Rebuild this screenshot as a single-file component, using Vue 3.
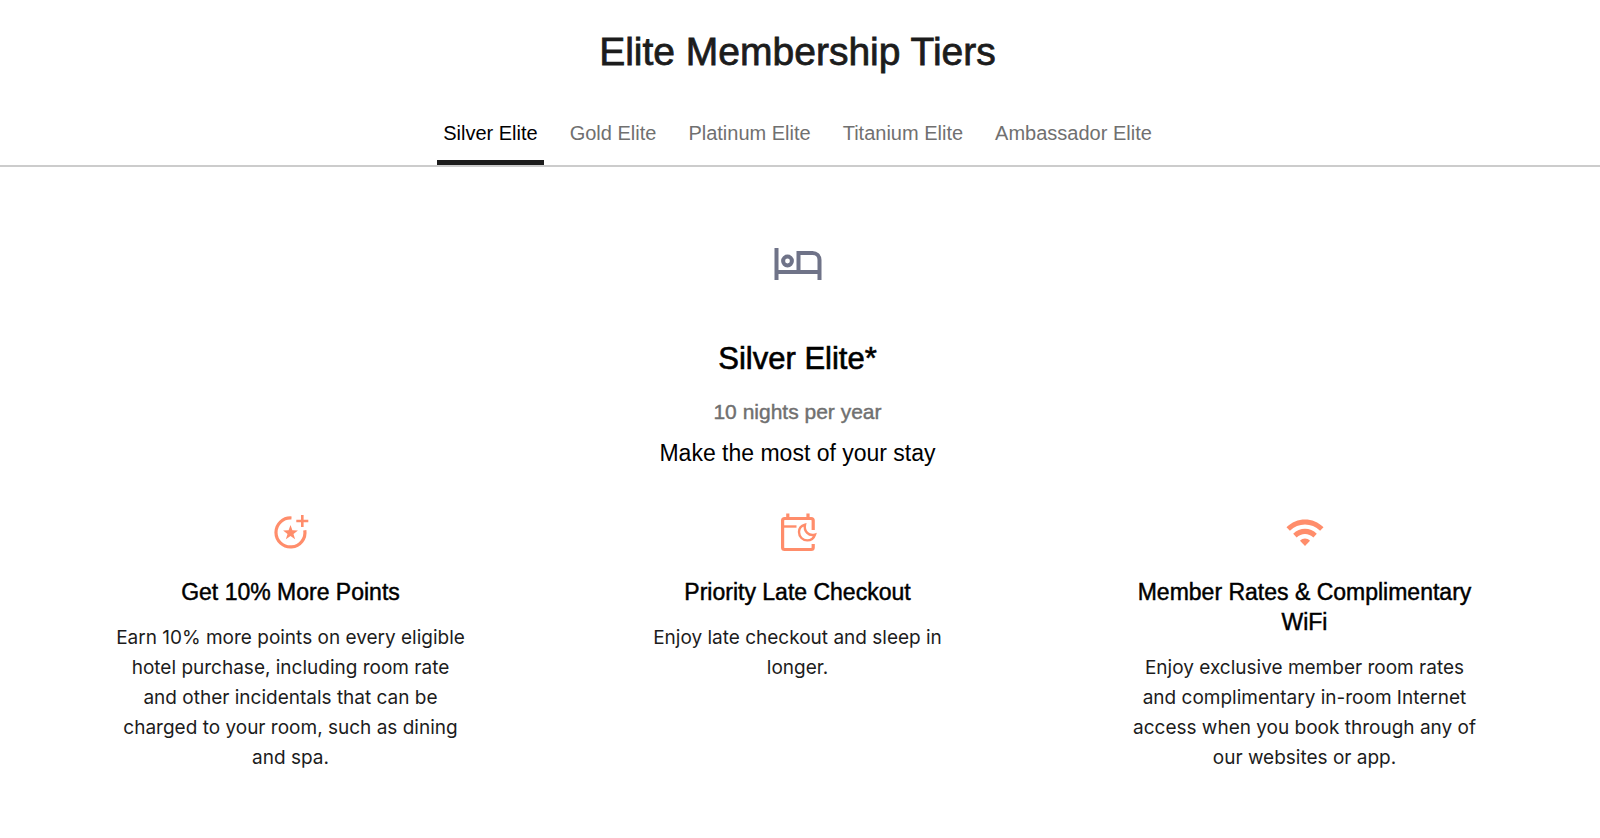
<script setup>
import { ref } from 'vue'

const tiers = ['Silver Elite', 'Gold Elite', 'Platinum Elite', 'Titanium Elite', 'Ambassador Elite']
const active = ref('Silver Elite')

const benefits = [
  {
    icon: 'points',
    title: 'Get 10% More Points',
    text: 'Earn 10% more points on every eligible hotel purchase, including room rate and other incidentals that can be charged to your room, such as dining and spa.',
  },
  {
    icon: 'checkout',
    title: 'Priority Late Checkout',
    text: 'Enjoy late checkout and sleep in longer.',
  },
  {
    icon: 'wifi',
    title: 'Member Rates & Complimentary WiFi',
    text: 'Enjoy exclusive member room rates and complimentary in-room Internet access when you book through any of our websites or app.',
  },
]
</script>

<template>
  <main class="page">
    <h1 class="title">Elite Membership Tiers</h1>

    <div class="tabs" role="tablist" aria-label="Elite Membership Tiers">
      <button
        v-for="tier in tiers"
        :key="tier"
        type="button"
        role="tab"
        class="tab"
        :class="{ active: tier === active }"
        :aria-selected="tier === active"
        @click="active = tier"
      >{{ tier }}</button>
    </div>

    <section class="panel">
      <header class="intro">
        <svg class="bed" viewBox="0 0 48 34" aria-hidden="true">
          <g fill="none" stroke="currentColor" stroke-width="4">
            <path d="M2.500 1v32M45.500 33V13c0-4-3-7-7-7H24.500v19M2.500 25h43" />
            <circle cx="13.500" cy="14" r="4.400" />
          </g>
        </svg>
        <h2 class="tier">Silver Elite*</h2>
        <p class="nights">10 nights per year</p>
        <p class="tagline">Make the most of your stay</p>
      </header>

      <div class="benefits">
        <article v-for="b in benefits" :key="b.icon" class="benefit">
          <svg v-if="b.icon === 'points'" class="icon" viewBox="0 0 40 40" aria-hidden="true">
            <path d="M20.500 5A14.500 14.500 0 1 0 33.800 17.200" fill="none" stroke="currentColor" stroke-width="3.200" />
            <path d="M31.300 2v12M25.300 8h12" fill="none" stroke="currentColor" stroke-width="2.600" />
            <path d="M19.500 12l1.900 5.300 5.500.1-4.400 3.500 1.600 5.400-4.600-3.200-4.600 3.200 1.600-5.400-4.400-3.500 5.500-.1z" fill="currentColor" />
          </svg>
          <svg v-else-if="b.icon === 'checkout'" class="icon" viewBox="0 0 40 40" aria-hidden="true">
            <g fill="none" stroke="currentColor" stroke-width="3.200">
              <path d="M35.200 17V7.500a2 2 0 0 0-2-2H6.600a2 2 0 0 0-2 2v27a2 2 0 0 0 2 2h26.600a2 2 0 0 0 2-2V31" />
              <path d="M9.800.500v5M30 .500v5" />
              <path d="M5 13.500h13.500" stroke-width="2.400" />
              <path d="M27 11.700c-3.800 1-6 3.800-6 7.400 0 4.600 3.700 8.300 8.200 8.300 3.600 0 6.600-2.100 7.800-5.800-3.300.9-5.900.1-7.800-1.800-2.100-2.100-2.900-4.900-2.200-8.100z" stroke-width="2.400" />
            </g>
          </svg>
          <svg v-else class="icon" viewBox="0 0 40 40" aria-hidden="true">
            <g fill="currentColor">
              <path d="M20 33l-5-5.200c2.800-3 7.200-3 10 0z" />
              <path d="M8.200 20.800c6.500-6.800 17.100-6.800 23.600 0l-3.400 3.600c-4.700-4.700-12.100-4.700-16.800 0z" />
              <path d="M1.500 14.200c10.200-10.400 26.800-10.400 37 0l-3.400 3.500c-8.400-8.300-21.800-8.300-30.200 0z" />
            </g>
          </svg>
          <h3 class="name">{{ b.title }}</h3>
          <p class="text">{{ b.text }}</p>
        </article>
      </div>
    </section>
  </main>
</template>

<style>
body {
  margin: 0;
  background: #fff;
}
</style>

<style scoped>
.page {
  font-family: "Liberation Sans", Arial, sans-serif;
  color: #1c1c1c;
  text-align: center;
  padding-top: 28px;
}

h1, h2, h3, p {
  margin: 0;
}

/* Medium weight for headings */
.title, .tier, .nights, .name {
  font-weight: 400;
  -webkit-text-stroke: 0.02em currentColor;
}

.title {
  font-size: 39px;
  line-height: 48px;
  padding-right: 5px;
}

.tabs {
  display: flex;
  justify-content: center;
  gap: 20px;
  margin-top: 36px;
  padding-right: 5px;
  border-bottom: 2px solid #ccc;
}

.tab {
  font: inherit;
  font-size: 20px;
  line-height: 24px;
  color: #707070;
  background: none;
  border: 0;
  border-bottom: 5px solid transparent;
  padding: 9px 6px 15px;
  cursor: pointer;
}

.tab.active {
  color: #000;
  border-bottom-color: #1c1c1c;
}

.panel {
  padding: 80px 42px 60px 37px;
}

.intro {
  display: flex;
  flex-direction: column;
  align-items: center;
  color: #000;
}

.bed {
  width: 48px;
  height: 34px;
  color: #6f7388;
}

.tier {
  font-size: 31px;
  line-height: 40px;
  margin-top: 58px;
}

.nights {
  font-size: 21px;
  line-height: 30px;
  margin-top: 18px;
  color: #707070;
}

.tagline {
  font-size: 23px;
  line-height: 30px;
  margin-top: 11px;
}

.benefits {
  display: grid;
  grid-template-columns: repeat(3, 1fr);
  margin-top: 45px;
}

.benefit {
  display: flex;
  flex-direction: column;
  align-items: center;
  width: 100%;
  max-width: 352px;
  margin: 0 auto;
}

.icon {
  width: 40px;
  height: 40px;
  color: #ff8d6b;
}

.name {
  font-size: 23px;
  line-height: 30px;
  margin-top: 24px;
  color: #000;
}

.text {
  font-family: Inter, "Liberation Sans", sans-serif;
  font-size: 19px;
  line-height: 30px;
  margin-top: 16px;
}
</style>
